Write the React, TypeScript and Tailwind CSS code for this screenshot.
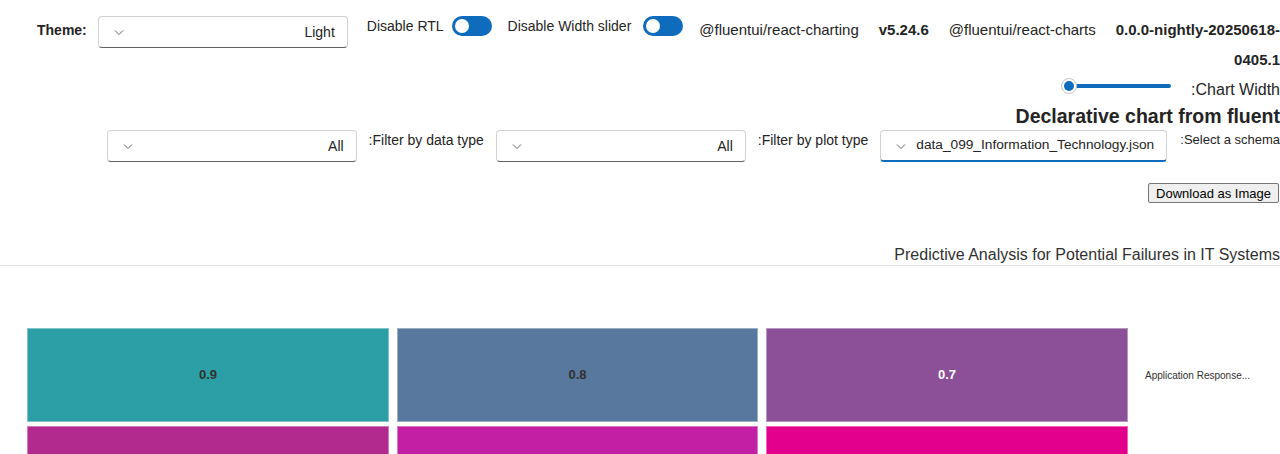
import React from 'react';

const Chevron = () => (
  <svg width="12" height="12" viewBox="0 0 12 12" className="shrink-0 text-[#616161]">
    <polyline points="2,4.5 6,8.5 10,4.5" fill="none" stroke="currentColor" strokeWidth="1" />
  </svg>
);

function Dropdown({ value, width, active = false, fill = false }: { value: string; width: string; active?: boolean; fill?: boolean }) {
  return (
    <div
      className={`${width} h-8 shrink-0 flex items-center rounded-[4px] border border-[#d1d1d1] bg-white pl-[14px] pr-3 ${
        active ? 'border-b-2 border-b-[#0f6cbd]' : 'border-b-[#616161]'
      }`}
    >
      <Chevron />
      <span className={`${fill ? 'ml-[9px] text-[13.7px]' : 'ml-auto text-sm'} text-[#242424] whitespace-nowrap`}>{value}</span>
    </div>
  );
}

const Toggle = () => (
  <div className="w-10 h-5 shrink-0 rounded-full bg-[#0f6cbd] flex items-center px-[3px]">
    <div className="w-[14px] h-[14px] rounded-full bg-white" />
  </div>
);

const cells = [
  { v: '0.9', bg: 'bg-[#2c9fa6]', text: 'text-[#323130] font-semibold' },
  { v: '0.8', bg: 'bg-[#58789e]', text: 'text-[#323130] font-semibold' },
  { v: '0.7', bg: 'bg-[#8b5097]', text: 'text-white font-bold' },
  { v: '', bg: 'bg-[#b32a8f]', text: '' },
  { v: '', bg: 'bg-[#c21fa5]', text: '' },
  { v: '', bg: 'bg-[#e3008c]', text: '' },
];

export default function App() {
  return (
    <div className="w-[1280px] h-[454px] overflow-hidden bg-white text-[#242424] font-['Liberation_Sans',Arial,sans-serif]">
      {/* top controls */}
      <div className="flex items-start pt-4 pl-[37px]">
        <span className="text-sm font-semibold leading-8 -mt-[2px]">Theme:</span>
        <div className="ml-[11px]">
          <Dropdown value="Light" width="w-[250px]" />
        </div>
        <span className="ml-[19px] text-sm leading-5">Disable RTL</span>
        <div className="ml-2">
          <Toggle />
        </div>
        <span className="ml-4 text-sm leading-5">Disable Width slider</span>
        <div className="ml-3">
          <Toggle />
        </div>
        <div className="ml-4 flex-1 -mt-px text-right text-[15px] leading-[30px]">
          <div className="flex justify-between whitespace-nowrap">
            <span>@fluentui/react-charting</span>
            <span className="font-bold">v5.24.6</span>
            <span>@fluentui/react-charts</span>
            <span className="font-semibold">0.0.0-nightly-20250618-</span>
          </div>
          <div className="font-semibold">0405.1</div>
        </div>
      </div>

      {/* chart width slider */}
      <div className="mt-px h-5 flex items-center justify-end">
        <div className="relative w-[110px] h-5 flex items-center">
          <div className="absolute left-[7px] right-0 h-1 rounded-full bg-[#0f6cbd]" />
          <div className="relative w-4 h-4 rounded-full border border-[#c7c7c7] bg-white flex items-center justify-center">
            <div className="w-[10px] h-[10px] rounded-full bg-[#0f6cbd]" />
          </div>
        </div>
        <span className="ml-[20px] text-base leading-5 mt-2">:Chart Width</span>
      </div>

      <div className="mt-[6px] text-right text-[19.5px] font-semibold leading-7">Declarative chart from fluent</div>

      {/* filters */}
      <div className="flex items-start justify-end gap-3">
        <Dropdown value="All" width="w-[250px]" />
        <span className="text-sm leading-5">:Filter by data type</span>
        <Dropdown value="All" width="w-[250px]" />
        <span className="text-sm leading-5">:Filter by plot type</span>
        <Dropdown value="data_099_Information_Technology.json" width="w-[287px]" active fill />
        <span className="text-[13px] leading-5 ml-px">:Select a schema</span>
      </div>

      <div className="mt-[21px] flex justify-end pr-px">
        <button className="h-5 px-[7px] rounded-[2px] border border-[#767676] bg-[#efefef] text-[13px] leading-none text-black">
          Download as Image
        </button>
      </div>

      <div className="mt-[42px] border-b border-[#e0e0e0]">
        <div className="text-right text-base leading-5 text-[#323130]">
          Predictive Analysis for Potential Failures in IT Systems
        </div>
      </div>

      {/* heatmap */}
      <div className="mt-[62px] pl-[27px] flex items-start">
        <div className="grid grid-cols-[362px_361px_362px] gap-x-2 gap-y-1">
          {cells.map((c, i) => (
            <div
              key={i}
              className={`h-[94px] ${c.bg} border border-white/40 flex items-center justify-center text-[13px] ${c.text}`}
            >
              {c.v}
            </div>
          ))}
        </div>
        <div className="ml-[17px] h-[94px] flex items-center text-[10px] text-[#323130]">Application Response...</div>
      </div>
    </div>
  );
}
